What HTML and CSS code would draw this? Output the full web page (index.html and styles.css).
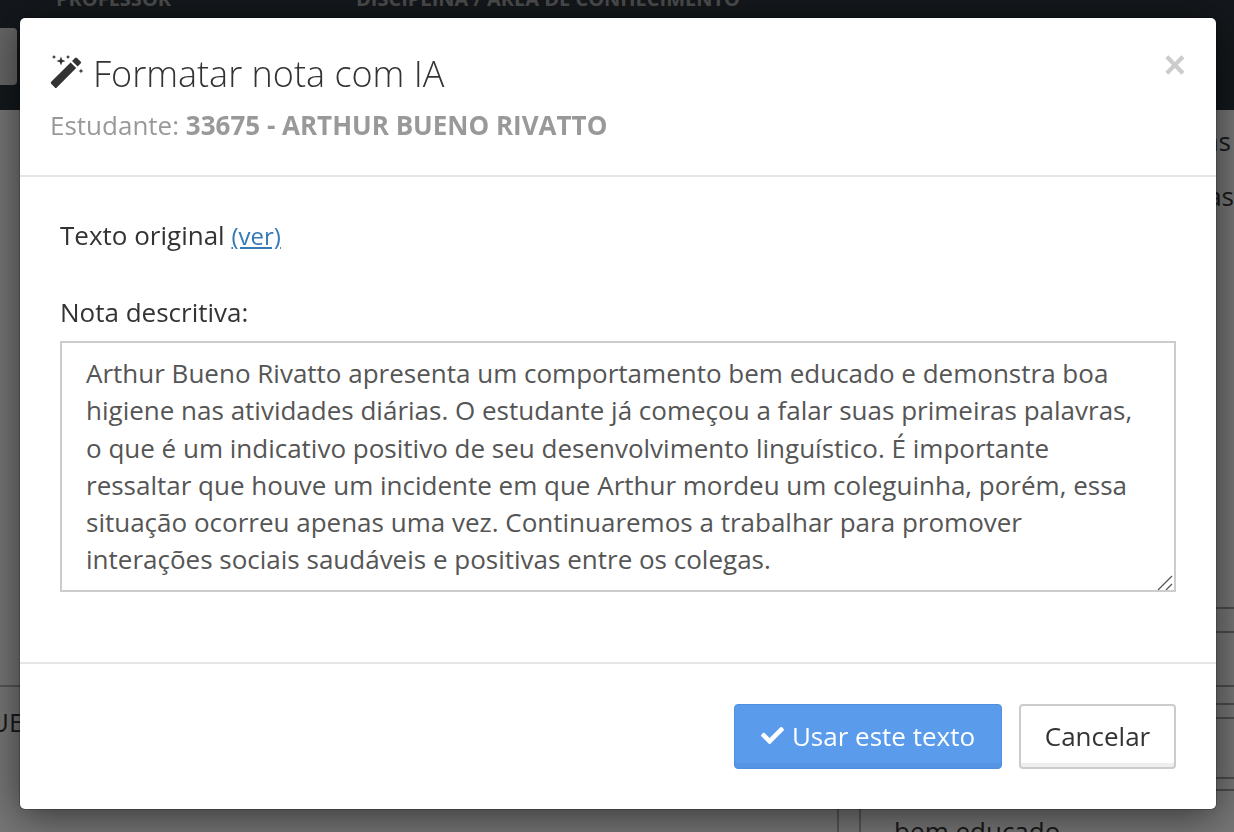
FILE: index.html
```html
<!DOCTYPE html>
<html lang="pt-BR">
<head>
  <meta charset="UTF-8" />
  <title>Formatar nota com IA</title>
  <link rel="stylesheet" href="styles.css">
</head>
<body>
  <div class="page">
    <div class="topbar">
      <div class="topbar-heads">
        <span class="head-professor">PROFESSOR</span>
        <span>DISCIPLINA / ÁREA DE CONHECIMENTO</span>
      </div>
      <div class="topbar-field"></div>
    </div>
    <div class="intro">
      <p class="intro-first">as</p>
      <p>as</p>
    </div>
    <div class="grades">
      <div class="grades-left">
        <div class="student-name">UE</div>
      </div>
      <div class="grades-right">
        <div class="row row-a"></div>
        <div class="row row-b"></div>
        <div class="row row-c"></div>
        <div class="row row-d"></div>
        <div class="row row-e"></div>
        <div class="row row-f"></div>
        <div class="row row-g"></div>
        <div class="row row-last">
          <div class="cell-num"></div>
          <div class="cell-text">- bem educado</div>
        </div>
      </div>
    </div>
  </div>

  <div class="backdrop">
    <div class="modal">
      <div class="modal-header">
        <button class="close">×</button>
        <h4 class="modal-title">
          <svg class="icon-wand" viewBox="0 0 34 34" width="34" height="34">
            <path d="M1.200 26.800 20.600 7.400l5.600 5.600L6.800 32.400a1.400 1.400 0 0 1-2 0l-3.600-3.600a1.400 1.400 0 0 1 0-2z" fill="#333"/>
            <path d="M22 6l3-3a1.400 1.400 0 0 1 2 0l3.600 3.600a1.400 1.400 0 0 1 0 2l-3 3z" fill="#333"/>
            <path d="M11 1.500l1.200 3.300 3.300 1.200-3.300 1.200L11 10.500 9.800 7.200 6.500 6l3.300-1.200z" fill="#333"/>
            <path d="M4 0l.7 1.300L6 2l-1.300.7L4 4l-.7-1.300L2 2l1.300-.7z" fill="#333"/>
            <path d="M18 0l.7 1.300L20 2l-1.300.7L18 4l-.7-1.300L16 2l1.300-.7z" fill="#333"/>
            <path d="M31 13.500l.7 1.800 1.800.7-1.800.7-.7 1.800-.7-1.800-1.800-.7 1.800-.7z" fill="#333"/>
          </svg>
          Formatar nota com IA
        </h4>
        <div class="modal-sub">Estudante: <b>33675 - ARTHUR BUENO RIVATTO</b></div>
      </div>
      <div class="modal-body">
        <div class="original">Texto original <a href="#">(ver)</a></div>
        <label class="note-label" for="note">Nota descritiva:</label>
        <div class="note-wrap">
          <textarea id="note" class="note" spellcheck="false">Arthur Bueno Rivatto apresenta um comportamento bem educado e demonstra boa higiene nas atividades diárias. O estudante já começou a falar suas primeiras palavras, o que é um indicativo positivo de seu desenvolvimento linguístico. É importante ressaltar que houve um incidente em que Arthur mordeu um coleguinha, porém, essa situação ocorreu apenas uma vez. Continuaremos a trabalhar para promover interações sociais saudáveis e positivas entre os colegas.</textarea>
          <svg class="note-grip" viewBox="0 0 16 16" width="16" height="16">
            <path d="M1 16 15 2M9 16l6-6" stroke="#555" stroke-width="1.300" fill="none"/>
          </svg>
        </div>
      </div>
      <div class="modal-footer">
        <button class="btn btn-primary">
          <svg class="icon-check" viewBox="0 0 512 512" width="23" height="23"><path fill="#fff" d="M173.898 439.404l-166.4-166.4c-9.997-9.997-9.997-26.206 0-36.204l36.203-36.204c9.997-9.998 26.207-9.998 36.204 0L192 312.69 432.095 72.596c9.997-9.997 26.207-9.997 36.204 0l36.203 36.204c9.997 9.997 9.997 26.206 0 36.204l-294.4 294.401c-9.998 9.997-26.207 9.997-36.204-.001z"/></svg>
          Usar este texto
        </button>
        <button class="btn btn-default">Cancelar</button>
      </div>
    </div>
  </div>
</body>
</html>
```

FILE: styles.css
```css
html, body {
  margin: 0;
  height: 100%;
}
body {
  font-family: 'Open Sans', sans-serif;
  color: #333;
  background: #ececec;
  overflow: hidden;
}
.page {
  height: 832px;
  overflow: hidden;
}
.topbar {
  height: 110px;
  background: #283038;
  color: #999;
}
.topbar-heads {
  display: flex;
  align-items: flex-end;
  height: 9px;
  padding-left: 56px;
  font-size: 20px;
  font-weight: 700;
  line-height: 20px;
  white-space: nowrap;
}
.head-professor {
  width: 300px;
}
.topbar-field {
  width: 17px;
  height: 57px;
  margin-top: 19px;
  background: #ccc;
  border-radius: 0 4px 4px 0;
}
.intro {
  height: 497px;
  padding-top: 13px;
  box-sizing: border-box;
  font-size: 26px;
  text-align: right;
}
.intro p {
  margin: 0 0 18px;
  line-height: 37px;
}
.intro .intro-first {
  padding-right: 3px;
}
.grades {
  display: flex;
  height: 225px;
}
.grades-left {
  width: 837px;
  padding-top: 78px;
  box-sizing: border-box;
}
.student-name {
  border-top: 2px solid #aaa;
  padding-top: 15px;
  margin-left: -10px;
  font-size: 26px;
  line-height: 40px;
}
.grades-right {
  flex: 1;
  display: flex;
  flex-direction: column;
}
.row {
  flex: none;
  border-bottom: 2px solid #999;
  box-sizing: border-box;
}
.row-a { height: 2px; }
.row-b { height: 24px; }
.row-c { height: 54px; }
.row-d { height: 18px; }
.row-e { height: 14px; }
.row-f { height: 60px; }
.row-g { height: 12px; }
.row-last {
  flex: 1;
  min-height: 0;
  display: flex;
  border-bottom: 0;
  border-left: 2px solid #aaa;
}
.cell-num {
  width: 20px;
  border-right: 2px solid #aaa;
}
.cell-text {
  padding: 20px 0 0 18px;
  font-size: 26px;
  line-height: 40px;
  white-space: nowrap;
}

.backdrop {
  position: fixed;
  inset: 0;
  background: rgba(0, 0, 0, 0.5);
}
.modal {
  position: absolute;
  left: 19px;
  top: 17px;
  width: 1196px;
  height: 791px;
  display: flex;
  flex-direction: column;
  background: #fff;
  border: 1px solid rgba(0, 0, 0, 0.2);
  border-radius: 6px;
  background-clip: padding-box;
  box-shadow: 0 6px 40px rgba(0, 0, 0, 0.55);
}
.modal-header {
  position: relative;
  height: 159px;
  box-sizing: border-box;
  padding: 31px 30px 0;
  border-bottom: 2px solid #e5e5e5;
}
.close {
  position: absolute;
  top: 23px;
  right: 30px;
  padding: 0;
  border: 0;
  background: none;
  color: #ccc;
  font-family: 'Liberation Sans', sans-serif;
  font-size: 38px;
  font-weight: 700;
  line-height: 48px;
}
.modal-title {
  display: flex;
  align-items: center;
  gap: 9px;
  margin: 0;
  font-size: 36px;
  font-weight: 300;
  line-height: 50px;
}
.icon-wand {
  margin-top: -5px;
}
.modal-sub {
  padding-top: 1px;
  font-size: 26px;
  line-height: 50px;
  color: #999;
}
.modal-body {
  flex: 1;
  padding: 38px 40px 0;
}
.original {
  font-size: 26px;
  line-height: 40px;
}
.original a {
  color: #337ab7;
  font-size: 24px;
}
.note-label {
  display: block;
  margin-top: 36px;
  font-size: 26px;
  line-height: 40px;
}
.note-wrap {
  position: relative;
  margin-top: 9px;
}
.note {
  display: block;
  box-sizing: border-box;
  width: 1116px;
  height: 251px;
  padding: 12px 24px;
  border: 2px solid #ccc;
  border-radius: 0;
  outline: none;
  resize: none;
  font-family: 'Open Sans', sans-serif;
  font-size: 26px;
  line-height: 37.3px;
  color: #555;
}
.note-grip {
  position: absolute;
  right: 3px;
  bottom: 2px;
}
.modal-footer {
  display: flex;
  justify-content: flex-end;
  gap: 17px;
  height: 147px;
  box-sizing: border-box;
  padding: 40px 40px 0;
  border-top: 2px solid #e5e5e5;
}
.btn {
  display: flex;
  align-items: center;
  justify-content: center;
  gap: 8px;
  box-sizing: border-box;
  height: 65px;
  padding: 0 0 2px;
  border-radius: 4px;
  font-family: 'Open Sans', sans-serif;
  font-size: 26px;
}
.btn-primary {
  width: 268px;
  color: #fff;
  background: #5a9bec;
  border: 1px solid #4f8fdf;
  box-shadow: inset 0 -5px 0 #5594e4;
}
.btn-default {
  width: 157px;
  color: #333;
  background: #fff;
  border: 2px solid #ccc;
  box-shadow: inset 0 -4px 0 #eee;
}
```
